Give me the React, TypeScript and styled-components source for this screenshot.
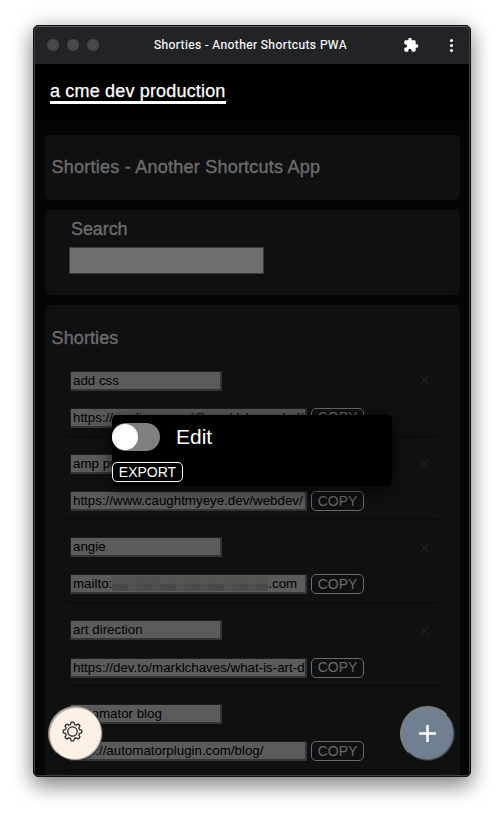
import React from "react";
import styled, { createGlobalStyle } from "styled-components";

const Global = createGlobalStyle`
  * { box-sizing: border-box; }
  html, body { margin: 0; background: #fff; }
  body { height: 818px; overflow: hidden; font-family: "Liberation Sans", Arial, sans-serif; }
`;

const Desktop = styled.div`
  width: 504px;
  height: 818px;
  padding: 25px 33px;
  background: #fff;
`;

const AppWindow = styled.div`
  position: relative;
  display: flex;
  flex-direction: column;
  width: 438px;
  height: 752px;
  border: 1px solid #111;
  border-radius: 5px;
  overflow: hidden;
  background: #050506;
`;

const Shadow = styled.div`
  width: 438px;
  height: 752px;
  border-radius: 5px;
  box-shadow: 0 10px 20px rgba(0, 0, 0, 0.36), 0 2px 22px rgba(0, 0, 0, 0.24);
`;

const Rim = styled.div`
  position: absolute;
  inset: 0;
  border: 1px solid #3d3e40;
  border-top-color: #5d5e60;
  border-radius: 4px;
  pointer-events: none;
`;

const TitleBar = styled.div`
  display: flex;
  align-items: center;
  flex: none;
  height: 38px;
  padding: 0 15px 0 13px;
  background: #222326;
`;

const Lights = styled.div`
  display: flex;
  gap: 8px;
  width: 107px;
`;

const Light = styled.span`
  width: 12px;
  height: 12px;
  border-radius: 50%;
  background: #47484b;
`;

const WindowTitle = styled.div`
  width: 249px;
  white-space: nowrap;
  font: 400 12px/16px Roboto, sans-serif;
  letter-spacing: 0.42px;
  color: #fff;
  -webkit-text-stroke: 0.15px #fff;
`;

const TitleIcon = styled.svg`
  flex: none;
  width: 16px;
  height: 16px;
  margin-right: 28px;
  fill: #fff;
`;

const Dots = styled.div`
  display: grid;
  gap: 2px;
  margin-left: 3px;
  i { width: 3px; height: 3px; border-radius: 50%; background: #fff; }
`;

const Header = styled.header`
  flex: none;
  height: 56px;
  padding: 16px;
  background: #000;
`;

const Brand = styled.a`
  display: inline-block;
  height: 24px;
  border-bottom: 3px solid #fff;
  font-size: 18px;
  line-height: 22px;
  letter-spacing: 0.17px;
  white-space: nowrap;
  color: #fff;
  -webkit-text-stroke: 0.25px #fff;
`;

const Main = styled.main`
  display: flex;
  flex-direction: column;
  flex: none;
  gap: 10px;
  padding: 15px 10px 0 11px;
`;

const Card = styled.section<{ $h: number }>`
  height: ${(p) => p.$h}px;
  border-radius: 5px;
  background: #0f1012;
  overflow: hidden;
`;

const Heading = styled.h2<{ $top: number; $left?: number; $track?: number }>`
  margin: 0;
  padding: ${(p) => p.$top}px 0 0 ${(p) => p.$left ?? 6.5}px;
  font-size: 18px;
  line-height: 22px;
  font-weight: 400;
  letter-spacing: ${(p) => p.$track ?? 0.12}px;
  white-space: nowrap;
  color: #6b6b6b;
  -webkit-text-stroke: 0.4px #6b6b6b;
`;

const SearchInput = styled.input`
  display: block;
  width: 195px;
  height: 27px;
  margin: 7px 0 0 24px;
  border: 1px solid #3b3b3b;
  background: #6e6e6e;
`;

const List = styled.div`
  display: flex;
  flex-direction: column;
  gap: 12.3px;
  margin: 15.6px 18px 0 19px;
`;

const Item = styled.article`
  height: 71px;
  padding: 6px 13px 0 6px;
  border-radius: 5px;
  box-shadow: 0 2px 2px -1px #08090a;
`;

const Line = styled.div`
  display: flex;
  align-items: center;
  height: 20px;
  margin-bottom: 17.3px;
`;

const Field = styled.div<{ $w: number }>`
  flex: none;
  width: ${(p) => p.$w}px;
  height: 20px;
  padding-left: 2px;
  border: 2px solid;
  border-width: 1px 2px 2px 1px;
  border-color: #1b1c1d #343434 #343434 #1b1c1d;
  background: #5b5b5b;
  overflow: hidden;
  white-space: pre;
  font-size: 13.33px;
  line-height: 17px;
  color: #000;
`;

const Copy = styled.button`
  flex: none;
  width: 53px;
  height: 20px;
  margin-left: 4px;
  padding: 0;
  border: 1px solid #6b6b6b;
  border-radius: 5px;
  background: transparent;
  font: 14px/17px "Liberation Sans", Arial, sans-serif;
  color: #6b6b6b;
`;

const Remove = styled.svg`
  width: 9px;
  height: 9px;
  margin-left: auto;
  stroke: #222324;
  stroke-width: 1.4;
`;

const Redacted = styled.svg`
  display: inline-block;
  width: 156px;
  height: 16px;
  vertical-align: top;
`;

const Popup = styled.div`
  position: absolute;
  left: 78px;
  top: 389px;
  width: 280px;
  height: 71px;
  border-radius: 5px;
  background: #000;
  box-shadow: 0 4px 18px rgba(0, 0, 0, 0.65);
`;

const ToggleRow = styled.label`
  display: flex;
  align-items: center;
  gap: 16px;
  height: 28px;
  margin-top: 8px;
  font-size: 21px;
  color: #fff;
`;

const Toggle = styled.span`
  width: 48px;
  height: 28px;
  padding: 1px 0;
  border-radius: 14px;
  background: #808080;
  &::before {
    content: "";
    display: block;
    width: 26px;
    height: 26px;
    border-radius: 50%;
    background: #fff;
  }
`;

const Export = styled.button`
  display: block;
  width: 71px;
  height: 20px;
  margin-top: 11px;
  padding: 0;
  border: 1px solid #fff;
  border-radius: 5px;
  background: #000;
  font: 14px/18px "Liberation Sans", Arial, sans-serif;
  color: #fff;
`;

const Fab = styled.button<{ $x: number; $bg: string }>`
  position: absolute;
  left: ${(p) => p.$x}px;
  top: 680px;
  display: grid;
  place-items: center;
  width: 55px;
  height: 55px;
  padding: 0;
  border: 1px solid;
  border-color: #85817d #252628 #252628 #85817d;
  border-radius: 50%;
  background: ${(p) => p.$bg};
  box-shadow: inset -1px -1px 0 rgba(37, 38, 40, 0.35), inset 1px 1px 0 rgba(133, 129, 125, 0.6);
`;

const GearIcon = styled.svg`
  width: 21px;
  height: 21px;
  margin: -5px 6px 0 0;
  fill: none;
  stroke: #24211f;
  stroke-width: 1.25;
  stroke-linejoin: round;
`;

const Plus = styled.svg`
  width: 17px;
  height: 17px;
  stroke: #fff;
  stroke-width: 2.5;
`;

const gearOutline = (() => {
  const point = (radius: number, degrees: number) => {
    const a = (degrees * Math.PI) / 180;
    return `${(10.5 + radius * Math.cos(a)).toFixed(2)} ${(10.5 + radius * Math.sin(a)).toFixed(2)}`;
  };
  let d = `M${point(7.4, -15)}`;
  for (let t = 0; t < 360; t += 45) {
    d += `L${point(9.2, t - 9)}Q${point(9.7, t)} ${point(9.2, t + 9)}`;
    d += `L${point(7.4, t + 15)}Q${point(6.9, t + 22.5)} ${point(7.4, t + 30)}`;
  }
  return `${d}Z`;
})();

const upper = ["#545454", "#525250", "#535352", "#4f4f4e", "#51514f", "#4f4f4e", "#555653", "#535451", "#565753", "#545551", "#52534f", "#565753", "#535450", "#565753", "#535450", "#545550", "#52534f", "#565752", "#52524f", "#555550"];
const lower = ["#51514f", "#484847", "#4a4a49", "#50504e", "#4b4b4a", "#4e4f4d"];

const Mosaic = () => (
  <Redacted viewBox="0 0 156 16">
    <rect y="1" width="156" height="15" fill="#51524f" />
    {upper.map((c, i) => (
      <rect key={i} x={i * 8} y={1} width={8} height={8} fill={c} />
    ))}
    {upper.map((_, i) => (
      <rect key={i} x={i * 8} y={9} width={8} height={7} fill={lower[(i * 5 + 2) % 6]} />
    ))}
  </Redacted>
);

const items: { name: string; url: React.ReactNode }[] = [
  { name: "add css", url: "https://medium.com/@marklchaves/ad/" },
  { name: "amp pwa", url: "https://www.caughtmyeye.dev/webdev/" },
  { name: "angie", url: <>mailto:<Mosaic />.com</> },
  { name: "art direction", url: "https://dev.to/marklchaves/what-is-art-d" },
  { name: "automator blog", url: "http://automatorplugin.com/blog/" },
];

export default function App() {
  return (
    <Desktop>
      <Global />
      <Shadow>
        <AppWindow>
          <TitleBar>
            <Lights><Light /><Light /><Light /></Lights>
            <WindowTitle>Shorties - Another Shortcuts PWA</WindowTitle>
            <TitleIcon viewBox="0 0 24 24">
              <path d="M20.5 11H19V7c0-1.100-.9-2-2-2h-4V3.500a2.500 2.500 0 0 0-5 0V5H4c-1.100 0-2 .9-2 2v3.800h1.500a2.700 2.700 0 0 1 0 5.400H2V20c0 1.100.9 2 2 2h3.800v-1.500a2.700 2.700 0 0 1 5.400 0V22H17c1.100 0 2-.9 2-2v-4h1.500a2.500 2.500 0 0 0 0-5z" />
            </TitleIcon>
            <Dots><i /><i /><i /></Dots>
          </TitleBar>
          <Header><Brand>a cme dev production</Brand></Header>
          <Main>
            <Card $h={65}><Heading $top={21} $track={0.24}>Shorties - Another Shortcuts App</Heading></Card>
            <Card $h={85}>
              <Heading $top={8} $left={26} $track={-0.08}>Search</Heading>
              <SearchInput />
            </Card>
            <Card $h={480}>
              <Heading $top={22}>Shorties</Heading>
              <List>
                {items.map((it) => (
                  <Item key={it.name}>
                    <Line>
                      <Field $w={152}>{it.name}</Field>
                      <Remove viewBox="0 0 10 10"><path d="M1 1L9 9M9 1L1 9" /></Remove>
                    </Line>
                    <Line>
                      <Field $w={237}>{it.url}</Field>
                      <Copy>COPY</Copy>
                    </Line>
                  </Item>
                ))}
              </List>
            </Card>
          </Main>
          <Popup>
            <ToggleRow><Toggle />Edit</ToggleRow>
            <Export>EXPORT</Export>
          </Popup>
          <Rim />
          <Fab $x={14} $bg="#faf0e6">
            <GearIcon viewBox="0 0 21 21">
              <path d={gearOutline} />
              <circle cx="10.5" cy="10.5" r="4.7" />
            </GearIcon>
          </Fab>
          <Fab $x={366} $bg="#708090">
            <Plus viewBox="0 0 17 17"><path d="M8.500 0V17M0 8.500H17" /></Plus>
          </Fab>
        </AppWindow>
      </Shadow>
    </Desktop>
  );
}
